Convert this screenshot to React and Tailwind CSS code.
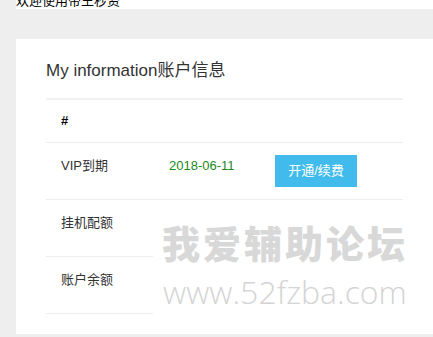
import React from 'react';

const rows = [
    { label: 'VIP到期', value: '2018-06-11', action: '开通/续费' },
    { label: '挂机配额' },
    { label: '账户余额' },
];

const App = () => {
    return (
        <div
            className="min-h-screen w-[433px] h-[337px] overflow-hidden bg-[#eeeeee] pl-4 text-[#333333]"
            style={{ fontFamily: '"Liberation Sans", "Noto Sans CJK SC", sans-serif' }}
        >
            <div className="h-[9px] overflow-hidden bg-white">
                <div className="-mt-[6px] text-[13px] leading-[13px] text-black">欢迎使用帝王秒资</div>
            </div>

            <div className="relative mt-[30px] h-[295px] bg-white pl-[30px] pt-[21px]">
                <h1 className="text-[17px] leading-[22px] text-[#333333]">My information账户信息</h1>

                <div className="mt-[16px] w-[357px] border-t-2 border-[#f2f2f2] text-[13px]">
                    <div className="flex h-[43px] items-center border-b border-[#eeeeee] px-[15px] font-bold text-black">
                        #
                    </div>
                    {rows.map((row) => (
                        <div key={row.label} className="flex h-[57px] border-b border-[#eeeeee]">
                            <div className="w-[107px] px-[15px] pt-[14px] leading-[18px]">{row.label}</div>
                            <div className="w-[107px] px-[16px] pt-[14px] leading-[18px] text-[#1a8a1a]">{row.value}</div>
                            <div className="pl-[15px] pt-[12px]">
                                {row.action && (
                                    <button className="h-[32px] w-[82px] bg-[#41bbeb] text-[13px] text-white">
                                        {row.action}
                                    </button>
                                )}
                            </div>
                        </div>
                    ))}
                </div>

                {/* watermark overlay */}
                <div className="absolute left-[137px] top-[177px] flex h-[118px] w-[264px] flex-col items-center bg-white pt-[4px]">
                    <div
                        className="text-[38px] font-black leading-[44px] tracking-[3px] text-[#d8d8d8]"
                        style={{ fontFamily: '"Noto Sans CJK SC", sans-serif' }}
                    >
                        我爱辅助论坛
                    </div>
                    <div
                        className="mt-[8px] text-[32px] font-light leading-[40px] text-[#d4d4d4]"
                        style={{ fontFamily: '"Open Sans", sans-serif' }}
                    >
                        www.52fzba.com
                    </div>
                </div>
            </div>
        </div>
    );
};

export default App;
